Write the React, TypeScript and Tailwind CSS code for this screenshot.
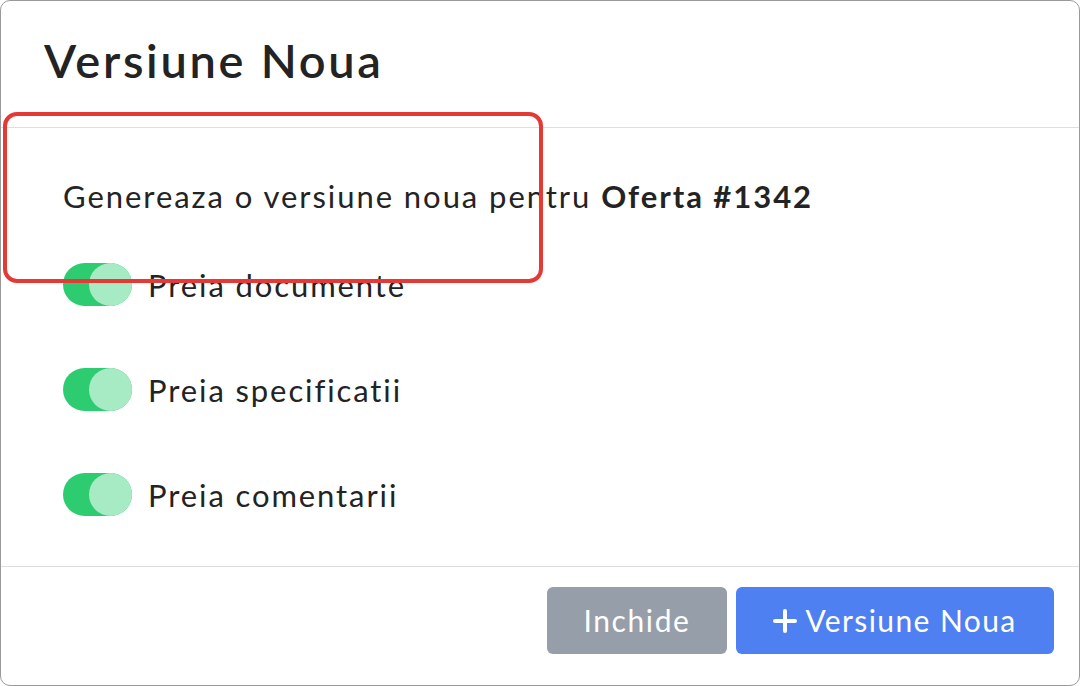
import { useState } from 'react'

const FONT = "font-['Lato','Noto_Sans',sans-serif]"

const OPTIONS = ['Preia documente', 'Preia specificatii', 'Preia comentarii']

function Toggle({ on, onClick }: { on: boolean; onClick: () => void }) {
  return (
    <button
      type="button"
      onClick={onClick}
      className={`relative h-[43px] w-[69px] shrink-0 rounded-full ${on ? 'bg-[#2ecc71]' : 'bg-[#d1d5db]'}`}
    >
      <span
        className={`absolute top-0 h-[43px] w-[43px] rounded-full ${on ? 'right-0 bg-[#a6ebc3]' : 'left-0 bg-white'}`}
      />
    </button>
  )
}

export default function App() {
  const [checked, setChecked] = useState([true, true, true])

  return (
    <div className={`relative flex h-[686px] w-[1080px] flex-col overflow-hidden rounded-[10px] border border-[#9a9a9a] bg-white text-[#232323] ${FONT}`}>
      {/* Header */}
      <div className="flex h-[127px] shrink-0 items-center border-b border-[#dedede] pl-[43px] pb-[8px]">
        <h2 className="text-[47px] font-semibold leading-none tracking-[2.7px]">Versiune Noua</h2>
      </div>

      {/* Body */}
      <div className="flex flex-1 flex-col pl-[62px] pt-[48px]">
        <p className="text-[31px] leading-[40px] tracking-[1.95px]">
          Genereaza o versiune noua pentru <span className="font-bold">Oferta #1342</span>
        </p>
        <div className="mt-[47px] flex flex-col gap-[62px]">
          {OPTIONS.map((label, i) => (
            <label key={label} className="flex cursor-pointer items-center gap-[16px]">
              <Toggle
                on={checked[i]}
                onClick={() => setChecked(c => c.map((v, j) => (j === i ? !v : v)))}
              />
              <span className="text-[31px] leading-[40px] tracking-[1.9px]">{label}</span>
            </label>
          ))}
        </div>
      </div>

      {/* Footer */}
      <div className="flex h-[119px] shrink-0 items-start justify-end gap-[9px] border-t border-[#dedede] pt-[20px] pr-[25px]">
        <button className="flex h-[67px] w-[180px] items-center justify-center rounded-[6px] bg-[#969ea9] text-[30px] tracking-[1.6px] text-white">
          Inchide
        </button>
        <button className="flex h-[67px] w-[318px] items-center justify-center gap-[8px] rounded-[6px] bg-[#4f80f2] text-[30px] tracking-[1.4px] text-white">
          <svg width="24" height="24" viewBox="0 0 24 24" fill="none" stroke="currentColor" strokeWidth="4" strokeLinecap="round">
            <path d="M12 2v20M2 12h20" />
          </svg>
          Versiune Noua
        </button>
      </div>

      {/* Annotation highlight */}
      <div className="pointer-events-none absolute left-[2px] top-[111px] h-[171px] w-[540px] rounded-[14px] border-[4px] border-[#e53935]" />
    </div>
  )
}
